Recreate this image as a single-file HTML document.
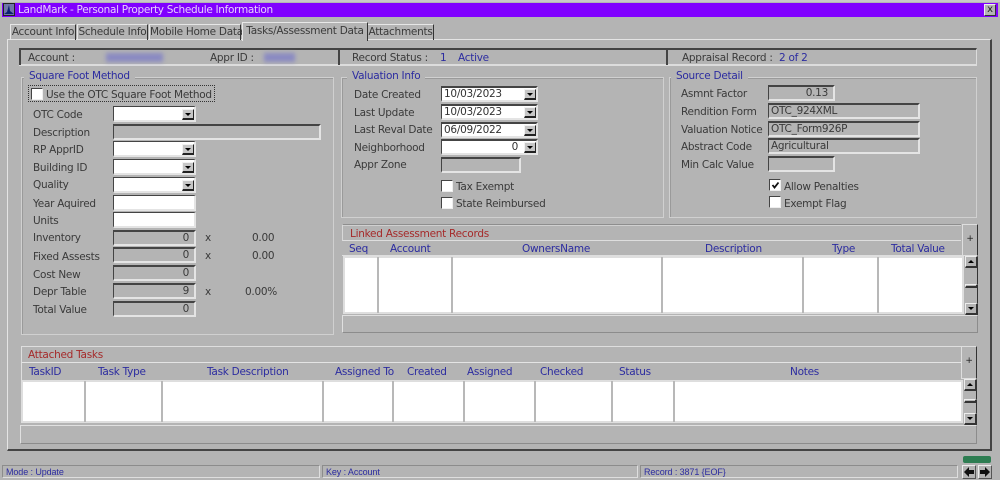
<!DOCTYPE html>
<html><head><meta charset="utf-8">
<style>
html,body{margin:0;padding:0;background:#b4b4b4}
#r{position:relative;width:1000px;height:480px;overflow:hidden;background:#b4b4b4;font:10.5px/14px "DejaVu Sans",sans-serif;letter-spacing:-.27px;color:#3a3a3a}
#r div,#r span.a{position:absolute;box-sizing:border-box;white-space:nowrap}
.l{height:14px;line-height:16px}
.b{color:#2c2ca0}
.rd{color:#a52a2a}
.tab{top:24px;height:16px;border-top:1px solid #e6e6e6;border-left:1px solid #e6e6e6;border-right:1px solid #333;text-align:center;line-height:15px}
.f{background:#fff;border-top:1px solid #444;border-left:1px solid #444;border-right:2px solid #e4e4e4;border-bottom:2px solid #e4e4e4;height:16px;line-height:13px;padding:0 2px}
.g{background:#b4b4b4;text-align:right;padding-right:5px;border-top:2px solid #444;line-height:12px}
.g.t{text-align:left;padding:0 2px;line-height:12px}
.dd{width:12px;height:11px;right:0;top:2px;background:#c6c6c6;border-top:1px solid #f2f2f2;border-left:1px solid #f2f2f2;border-right:1px solid #222;border-bottom:2px solid #222}
.dd:after{content:"";position:absolute;left:2px;top:3px;border-left:3px solid transparent;border-right:3px solid transparent;border-top:3px solid #000}
.box{border:1px solid #d0d0d0;outline:0;box-shadow:inset 1px 1px 0 #9a9a9a}
.leg{top:70px;height:14px;background:#b4b4b4;padding:0 5px;color:#2c2ca0;line-height:13px}
.cb{width:12px;height:12px;background:#fff;border-top:1px solid #444;border-left:1px solid #444;border-right:1px solid #eee;border-bottom:1px solid #eee}
.sep{background:#b8b8b8;width:2px}
.white{background:#fff;border:2px solid #dedede}
.pl{background:#b4b4b4;border-top:1px solid #e0e0e0;border-left:1px solid #e0e0e0;border-right:1px solid #8c8c8c;border-bottom:1px solid #8c8c8c}
.btn{background:#b4b4b4;border-top:1px solid #ededed;border-left:1px solid #ededed;border-right:2px solid #333;border-bottom:2px solid #333}
.st{top:465px;height:13px;border-top:1px solid #8c8c8c;border-left:1px solid #8c8c8c;border-right:1px solid #dedede;border-bottom:1px solid #dedede;font:9px/12px "Liberation Sans",sans-serif;letter-spacing:-.1px;color:#2c2ca0;padding-left:3px}
.blur{filter:blur(2px);color:#4a4ab8}
</style></head><body><div id="r">

<div style="left:0;top:0;width:1000px;height:2px;background:#c8c8c8"></div>
<div style="left:2px;top:3px;width:996px;height:14px;background:#8000ff"></div>
<div style="left:3px;top:3px;width:12px;height:13px;background:#6f76a8;border:1px solid #222"></div>
<svg style="position:absolute;left:4px;top:4px" width="10" height="11"><path d="M0 10 L3 8 L5 1 L6 7 L10 10Z" fill="#0d1f70"/></svg>
<div style="left:18px;top:3px;color:#e8d0ff;line-height:15px;letter-spacing:-.31px;font-size:10.5px">LandMark - Personal Property Schedule Information</div>
<div style="left:984px;top:4px;width:12px;height:12px;background:#b4b4b4;border-top:1px solid #eee;border-left:1px solid #eee;border-right:1px solid #333;border-bottom:1px solid #333;text-align:center;line-height:9px;font-size:10px;color:#222">x</div>

<!-- main panel -->
<div style="left:7px;top:39px;width:985px;height:412px;border-top:1px solid #e4e4e4;border-left:1px solid #e4e4e4;border-right:2px solid #444;border-bottom:2px solid #444"></div>

<!-- tabs -->
<div class="tab" style="left:10px;width:66px">Account Info</div>
<div class="tab" style="left:77px;width:71px">Schedule Info</div>
<div class="tab" style="left:149px;width:92px">Mobile Home Data</div>
<div class="tab" style="left:242px;top:22px;width:126px;height:19px;background:#b4b4b4;line-height:17px;border-top:1px solid #e8e8e8;border-left:1px solid #e8e8e8">Tasks/Assessment Data</div>
<div class="tab" style="left:368px;width:66px;border-left:0">Attachments</div>

<!-- header bar -->
<div style="left:19px;top:48px;width:958px;height:18px;border-top:2px solid #444;border-bottom:2px solid #dcdcdc;border-right:1px solid #dcdcdc"></div>
<div style="left:19px;top:48px;width:2px;height:17px;background:#444"></div>
<div style="left:338px;top:48px;width:2px;height:17px;background:#444"></div>
<div style="left:666px;top:48px;width:2px;height:17px;background:#444"></div>
<div class="l" style="left:28px;top:50px">Account :</div>
<div class="l blur" style="left:106px;top:53px;width:57px;height:9px;background:#8a8ac2"></div>
<div class="l" style="left:210px;top:50px">Appr ID :</div>
<div class="l blur" style="left:264px;top:53px;width:31px;height:9px;background:#8a8ac2"></div>
<div class="l" style="left:352px;top:50px">Record Status :</div>
<div class="l b" style="left:440px;top:50px">1</div>
<div class="l b" style="left:458px;top:50px">Active</div>
<div class="l" style="left:682px;top:50px">Appraisal Record :</div>
<div class="l b" style="left:779px;top:50px">2 of 2</div>

<!-- group boxes -->
<div class="box" style="left:21px;top:77px;width:313px;height:258px"></div>
<div class="leg" style="left:24px;">Square Foot Method</div>
<div class="box" style="left:341px;top:77px;width:323px;height:141px"></div>
<div class="leg" style="left:347px;">Valuation Info</div>
<div class="box" style="left:669px;top:77px;width:308px;height:141px"></div>
<div class="leg" style="left:671px;">Source Detail</div>

<!-- square foot -->
<div style="left:28px;top:85px;width:187px;height:17px;border:1px dotted #333"></div>
<div class="cb" style="left:31px;top:88px"></div>
<div class="l" style="left:46px;top:87px">Use the OTC Square Foot Method</div>

<div class="l" style="left:33px;top:107px">OTC Code</div>
<div class="f" style="left:113px;top:106px;width:83px"><div class="dd"></div></div>
<div class="l" style="left:33px;top:125px">Description</div>
<div class="f g" style="left:113px;top:124px;width:208px"></div>
<div class="l" style="left:33px;top:142px">RP ApprID</div>
<div class="f" style="left:113px;top:141px;width:83px"><div class="dd"></div></div>
<div class="l" style="left:33px;top:160px">Building ID</div>
<div class="f" style="left:113px;top:159px;width:83px"><div class="dd"></div></div>
<div class="l" style="left:33px;top:177px">Quality</div>
<div class="f" style="left:113px;top:177px;width:83px"><div class="dd"></div></div>
<div class="l" style="left:33px;top:196px">Year Aquired</div>
<div class="f" style="left:113px;top:195px;width:83px"></div>
<div class="l" style="left:33px;top:213px">Units</div>
<div class="f" style="left:113px;top:212px;width:83px"></div>
<div class="l" style="left:33px;top:230px">Inventory</div>
<div class="f g" style="left:113px;top:230px;width:83px">0</div>
<div class="l" style="left:205px;top:230px">x</div>
<div class="l" style="left:252px;top:230px">0.00</div>
<div class="l" style="left:33px;top:249px">Fixed Assests</div>
<div class="f g" style="left:113px;top:247px;width:83px">0</div>
<div class="l" style="left:205px;top:248px">x</div>
<div class="l" style="left:252px;top:248px">0.00</div>
<div class="l" style="left:33px;top:267px">Cost New</div>
<div class="f g" style="left:113px;top:265px;width:83px">0</div>
<div class="l" style="left:33px;top:284px">Depr Table</div>
<div class="f g" style="left:113px;top:283px;width:83px">9</div>
<div class="l" style="left:205px;top:284px">x</div>
<div class="l" style="left:245px;top:284px">0.00%</div>
<div class="l" style="left:33px;top:302px">Total Value</div>
<div class="f g" style="left:113px;top:301px;width:83px">0</div>

<!-- valuation -->
<div class="l" style="left:354px;top:87px">Date Created</div>
<div class="f" style="left:441px;top:86px;width:97px;border-top-width:2px;color:#333">10/03/2023<div class="dd" style="top:1px"></div></div>
<div class="l" style="left:354px;top:105px">Last Update</div>
<div class="f" style="left:441px;top:104px;width:97px;border-top-width:2px;color:#333">10/03/2023<div class="dd" style="top:1px"></div></div>
<div class="l" style="left:354px;top:122px">Last Reval Date</div>
<div class="f" style="left:441px;top:122px;width:97px;border-top-width:2px;color:#333">06/09/2022<div class="dd" style="top:1px"></div></div>
<div class="l" style="left:354px;top:140px">Neighborhood</div>
<div class="f" style="left:441px;top:139px;width:97px;border-top-width:2px;text-align:right;padding-right:18px;color:#333">0<div class="dd" style="top:1px"></div></div>
<div class="l" style="left:354px;top:157px">Appr Zone</div>
<div class="f g" style="left:441px;top:157px;width:80px"></div>
<div class="cb" style="left:441px;top:180px"></div>
<div class="l" style="left:456px;top:179px">Tax Exempt</div>
<div class="cb" style="left:441px;top:197px"></div>
<div class="l" style="left:456px;top:196px">State Reimbursed</div>

<!-- source detail -->
<div class="l" style="left:681px;top:86px">Asmnt Factor</div>
<div class="f g" style="left:768px;top:85px;width:67px;line-height:13px">0.13</div>
<div class="l" style="left:681px;top:104px">Rendition Form</div>
<div class="f g t" style="left:768px;top:103px;width:152px">OTC_924XML</div>
<div class="l" style="left:681px;top:122px">Valuation Notice</div>
<div class="f g t" style="left:768px;top:121px;width:152px">OTC_Form926P</div>
<div class="l" style="left:681px;top:139px">Abstract Code</div>
<div class="f g t" style="left:768px;top:138px;width:152px">Agricultural</div>
<div class="l" style="left:681px;top:157px">Min Calc Value</div>
<div class="f g" style="left:768px;top:156px;width:67px"></div>
<div class="cb" style="left:769px;top:179px"><svg style="position:absolute;left:1px;top:1px" width="9" height="9"><path d="M1.5 4 L3.5 6.5 L7.5 1.5" fill="none" stroke="#111" stroke-width="1.8"/></svg></div>
<div class="l" style="left:784px;top:179px">Allow Penalties</div>
<div class="cb" style="left:769px;top:196px"></div>
<div class="l" style="left:784px;top:196px">Exempt Flag</div>

<!-- linked -->
<div style="left:342px;top:224px;width:619px;height:17px;border-top:1px solid #8e8e8e;border-left:1px solid #d8d8d8;border-bottom:1px solid #dedede;box-shadow:inset 0 1px 0 #d0d0d0"></div>
<div class="l rd" style="left:350px;top:226px">Linked Assessment Records</div>
<div style="left:342px;top:255px;width:622px;height:1px;background:#dedede"></div>
<div class="l b" style="left:349px;top:241px">Seq</div>
<div class="l b" style="left:390px;top:241px">Account</div>
<div class="l b" style="left:522px;top:241px">OwnersName</div>
<div class="l b" style="left:705px;top:241px">Description</div>
<div class="l b" style="left:832px;top:241px">Type</div>
<div class="l b" style="left:891px;top:241px">Total Value</div>
<div class="white" style="left:343px;top:256px;width:621px;height:58px"></div>
<div class="sep" style="left:377px;top:257px;height:56px"></div>
<div class="sep" style="left:451px;top:257px;height:56px"></div>
<div class="sep" style="left:661px;top:257px;height:56px"></div>
<div class="sep" style="left:802px;top:257px;height:56px"></div>
<div class="sep" style="left:877px;top:257px;height:56px"></div>
<div style="left:962px;top:224px;width:16px;height:32px;background:#b4b4b4;border-top:1px solid #dedede;border-left:1px solid #dedede;border-right:1px solid #333;border-bottom:1px solid #dedede;text-align:center;line-height:28px;font-size:9px;color:#222">+</div>
<div style="left:965px;top:256px;width:13px;height:59px;background:#b4b4b4;border-right:1px solid #333"></div>
<div class="btn" style="left:965px;top:256px;width:13px;height:12px"><div style="left:2px;top:3px;border-left:3px solid transparent;border-right:3px solid transparent;border-bottom:3px solid #000"></div></div>
<div class="btn" style="left:965px;top:284px;width:13px;height:4px"></div>
<div class="btn" style="left:965px;top:303px;width:13px;height:12px"><div style="left:2px;top:3px;border-left:3px solid transparent;border-right:3px solid transparent;border-top:3px solid #000"></div></div>
<div class="pl" style="left:342px;top:315px;width:636px;height:18px"></div>

<!-- attached -->
<div style="left:21px;top:346px;width:940px;height:17px;border-top:1px solid #dedede;border-left:1px solid #dedede;border-bottom:1px solid #e4e4e4"></div>
<div class="l rd" style="left:28px;top:347px">Attached Tasks</div>
<div style="left:21px;top:363px;width:1px;height:17px;background:#dedede"></div>
<div class="l b" style="left:29px;top:364px">TaskID</div>
<div class="l b" style="left:98px;top:364px">Task Type</div>
<div class="l b" style="left:207px;top:364px">Task Description</div>
<div class="l b" style="left:335px;top:364px">Assigned To</div>
<div class="l b" style="left:407px;top:364px">Created</div>
<div class="l b" style="left:467px;top:364px">Assigned</div>
<div class="l b" style="left:540px;top:364px">Checked</div>
<div class="l b" style="left:619px;top:364px">Status</div>
<div class="l b" style="left:790px;top:364px">Notes</div>
<div class="white" style="left:21px;top:380px;width:942px;height:43px"></div>
<div class="sep" style="left:84px;top:381px;height:41px"></div>
<div class="sep" style="left:161px;top:381px;height:41px"></div>
<div class="sep" style="left:322px;top:381px;height:41px"></div>
<div class="sep" style="left:392px;top:381px;height:41px"></div>
<div class="sep" style="left:463px;top:381px;height:41px"></div>
<div class="sep" style="left:534px;top:381px;height:41px"></div>
<div class="sep" style="left:611px;top:381px;height:41px"></div>
<div class="sep" style="left:673px;top:381px;height:41px"></div>
<div style="left:961px;top:346px;width:16px;height:33px;background:#b4b4b4;border-top:1px solid #dedede;border-left:1px solid #dedede;border-right:1px solid #333;border-bottom:1px solid #dedede;text-align:center;line-height:29px;font-size:9px;color:#222">+</div>
<div style="left:964px;top:379px;width:13px;height:46px;background:#b4b4b4;border-right:1px solid #333"></div>
<div class="btn" style="left:964px;top:379px;width:13px;height:12px"><div style="left:2px;top:3px;border-left:3px solid transparent;border-right:3px solid transparent;border-bottom:3px solid #000"></div></div>
<div class="btn" style="left:964px;top:399px;width:13px;height:4px"></div>
<div class="btn" style="left:964px;top:413px;width:13px;height:12px"><div style="left:2px;top:3px;border-left:3px solid transparent;border-right:3px solid transparent;border-top:3px solid #000"></div></div>
<div class="pl" style="left:20px;top:425px;width:957px;height:19px"></div>

<!-- status bar -->
<div class="st" style="left:2px;width:318px">Mode : Update</div>
<div class="st" style="left:322px;width:316px">Key : Account</div>
<div class="st" style="left:640px;width:318px">Record : 3871 {EOF}</div>
<div style="left:963px;top:456px;width:28px;height:7px;background:#2e7d52;border-radius:2px"></div>
<div class="btn" style="left:962px;top:465px;width:14px;height:14px;border-width:1px;border-right-color:#555;border-bottom-color:#555"><svg style="position:absolute;left:1px;top:1px" width="10" height="10"><path d="M0 5 L5 0 V3 H10 V7 H5 V10Z" fill="#111"/></svg></div>
<div class="btn" style="left:978px;top:465px;width:14px;height:14px;border-width:1px;border-right-color:#555;border-bottom-color:#555"><svg style="position:absolute;left:1px;top:1px" width="10" height="10"><path d="M10 5 L5 0 V3 H0 V7 H5 V10Z" fill="#111"/></svg></div>

</div></body></html>
